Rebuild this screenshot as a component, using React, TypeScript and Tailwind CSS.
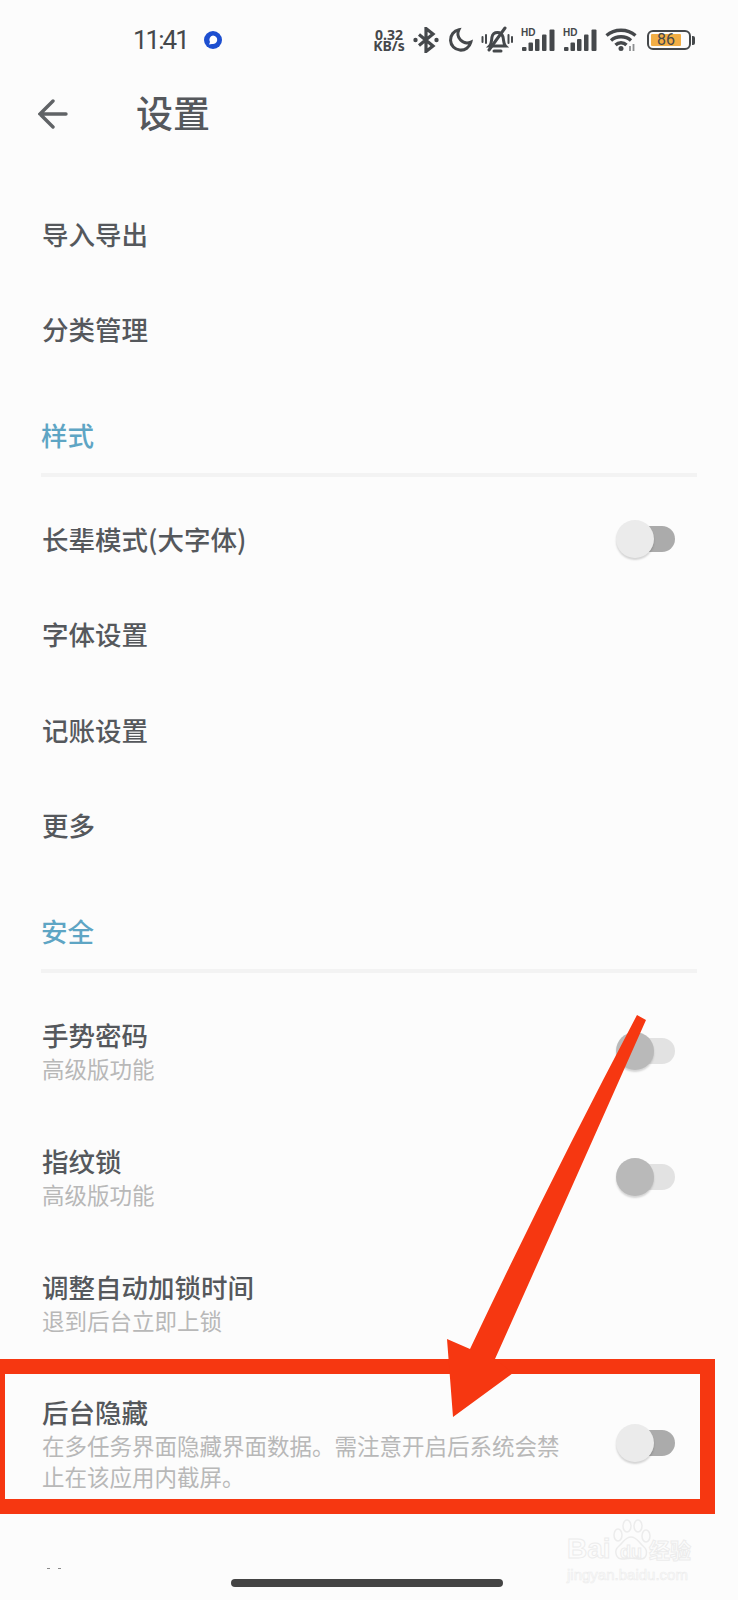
import React from 'react';

const fontStack = "font-['Noto_Sans_CJK_SC','Noto_Sans',sans-serif]";

const BluetoothIcon = () => (
  <svg width="26" height="26" viewBox="0 0 26 26" fill="none" stroke="#45484b" strokeWidth="3.200">
    <path d="M6 7.500l14 11.500-7 5.500V1.500l7 5.500L6 18.500" />
    <circle cx="2.500" cy="13" r="2.200" fill="#45484b" stroke="none" />
    <circle cx="23.500" cy="13" r="2.200" fill="#45484b" stroke="none" />
  </svg>
);

const MoonIcon = () => (
  <svg width="26" height="26" viewBox="0 0 24 24" fill="none" stroke="#45484b" strokeWidth="2.800" strokeLinecap="round">
    <path d="M11 2.500a9.500 9.500 0 1 0 11 11.500 8.500 8.500 0 0 1-11-11.500Z" />
  </svg>
);

const MuteIcon = () => (
  <svg width="32" height="28" viewBox="0 0 32 28" fill="none" stroke="#45484b" strokeWidth="3" strokeLinecap="round">
    <path d="M8.500 20c2-2 2-6 2.500-9 .6-3 3-4.500 5.500-4.500s4.500 1 5.500 4.500c.7 3 .5 7 2.500 9z" />
    <path d="M13 25h7" />
    <path d="M8 24 24 2" />
    <path d="M1.500 11v5M5 9v8M27.500 9v8M31 11v5" strokeWidth="2" />
  </svg>
);

const SignalIcon = () => (
  <svg width="34" height="24" viewBox="0 0 34 24">
    <text x="0" y="8" fontSize="10" fontWeight="700" fontFamily="Liberation Sans, sans-serif" fill="#45484b">HD</text>
    <rect x="1" y="19" width="4.500" height="4" rx="1" fill="#45484b" />
    <rect x="7.500" y="14.500" width="4.500" height="8.500" rx="1" fill="#45484b" />
    <rect x="14" y="11" width="4.500" height="12" rx="1" fill="#45484b" />
    <rect x="21" y="6.500" width="4.500" height="16.500" rx="1" fill="#45484b" />
    <rect x="28.500" y="1.500" width="5" height="21.500" rx="1" fill="#45484b" />
  </svg>
);

const WifiIcon = () => (
  <svg width="34" height="24" viewBox="0 0 34 24" fill="none" stroke="#45484b" strokeWidth="3.300">
    <path d="M1.500 7.500c8-7 21-7 29 0" />
    <path d="M6 12.500c5.500-5 14.500-5 20 0" />
    <path d="M10.500 17c3-3 8-3 11 0" />
    <circle cx="16" cy="20.500" r="2.500" fill="#45484b" stroke="none" />
    <path d="M25 18v5M28.500 16v7" stroke="#8d8f91" strokeWidth="1.800" />
  </svg>
);

const Toggle = ({ dim = false }: { dim?: boolean }) => (
  <div className="relative w-[59px] h-[38px] flex items-center justify-end shrink-0">
    <div className={`w-[50px] h-[26px] rounded-full ${dim ? 'bg-[#e2e2e2]' : 'bg-[#ababab]'}`} />
    <div
      className={`absolute left-0 top-0 w-[38px] h-[38px] rounded-full shadow-[0_2px_2px_rgba(0,0,0,0.16)] ${
        dim ? 'bg-[#b9b9b9]' : 'bg-[#ebebeb]'
      }`}
    />
  </div>
);

const Row = ({ title, toggle }: { title: string; toggle?: boolean }) => (
  <div className="h-[95.500px] flex items-center justify-between pl-[42px] pr-[63px]">
    <span className="text-[26.500px] leading-[34px] font-medium text-[#55585c]">{title}</span>
    {toggle && <Toggle />}
  </div>
);

const SubRow = ({ title, sub, toggle, dim }: { title: string; sub: string; toggle?: boolean; dim?: boolean }) => (
  <div className="h-[126px] flex items-center justify-between pl-[42px] pr-[63px]">
    <div>
      <div className="text-[26.500px] leading-[34px] font-medium text-[#55585c]">{title}</div>
      <div className="text-[22.500px] leading-[33px] text-[#b8b8b8]">{sub}</div>
    </div>
    {toggle && <Toggle dim={dim} />}
  </div>
);

const Section = ({ title, className }: { title: string; className: string }) => (
  <div className={`mx-[41px] flex items-end pb-[21px] border-b-[4px] border-[#f3f3f3] ${className}`}>
    <span className="text-[26.500px] leading-[34px] font-medium text-[#5ea5c4]">{title}</span>
  </div>
);

const App: React.FC = () => {
  return (
    <div className={`relative w-[738px] h-[1600px] overflow-hidden bg-[#fcfcfc] ${fontStack}`}>
      {/* status bar */}
      <div className="h-[80px] flex items-center justify-between pl-[133px] pr-[43px]">
        <div className="flex items-center gap-[16px]">
          <span className="text-[26px] leading-[30px] tracking-[-2px] text-[#45484b] font-['Roboto',sans-serif]">11:41</span>
          <svg width="18" height="18" viewBox="0 0 18 18">
            <circle cx="9" cy="9" r="9" fill="#1d4fd0" />
            <path d="M9 4.500a4.300 4.300 0 1 1-1 8.500l-3 .5 1-2.500a4.300 4.300 0 0 1 3-6.500Z" fill="#fff" />
          </svg>
        </div>
        <div className="flex items-center gap-[8px]">
          <div className="w-[32px] text-center text-[14px] leading-[11px] font-bold text-[#45484b] font-['Noto_Sans',sans-serif]">
            0.32 KB/s
          </div>
          <BluetoothIcon />
          <MoonIcon />
          <MuteIcon />
          <SignalIcon />
          <SignalIcon />
          <WifiIcon />
          <div className="flex items-center gap-[1px]">
            <div className="w-[44px] h-[20px] rounded-[6px] border-[2px] border-[#45484b] p-[2px]">
              <div className="h-full w-[30px] bg-[#f2ae45] rounded-[1px] text-[16px] leading-[12px] text-center text-[#45484b] font-['Roboto',sans-serif]">
                86
              </div>
            </div>
            <div className="w-[3px] h-[9px] rounded-r-[2px] bg-[#45484b]" />
          </div>
        </div>
      </div>

      {/* header */}
      <div className="h-[106px] pb-[43px] flex items-center pl-[38px]">
        <svg className="mt-[4px]" width="30" height="30" viewBox="0 0 30 30" fill="none" stroke="#606366" strokeWidth="3.400" strokeLinecap="round">
          <path d="M2 15h26M15 2 2 15l13 13" />
        </svg>
        <span className="ml-[68px] text-[37px] leading-[44px] font-medium text-[#55585c]">设置</span>
      </div>

      <Row title="导入导出" />
      <Row title="分类管理" />
      <Section title="样式" className="h-[100px] mb-[14px]" />
      <Row title="长辈模式(大字体)" toggle />
      <Row title="字体设置" />
      <Row title="记账设置" />
      <Row title="更多" />
      <Section title="安全" className="h-[100px] mb-[15px]" />
      <SubRow title="手势密码" sub="高级版功能" toggle dim />
      <SubRow title="指纹锁" sub="高级版功能" toggle dim />
      <SubRow title="调整自动加锁时间" sub="退到后台立即上锁" />
      <div className="flex items-center justify-between pl-[42px] pr-[63px] pt-[28px]">
        <div className="w-[522px]">
          <div className="text-[26.500px] leading-[36px] font-medium text-[#55585c]">后台隐藏</div>
          <div className="text-[22.500px] leading-[31px] text-[#b8b8b8]">
            在多任务界面隐藏界面数据。需注意开启后系统会禁止在该应用内截屏。
          </div>
        </div>
        <Toggle />
      </div>

      {/* cut off next row */}
      <div className="absolute left-[47px] top-[1568px] flex gap-[8px]">
        <div className="w-[3px] h-[1px] bg-[#8a8a8a]" />
        <div className="w-[3px] h-[1px] bg-[#8a8a8a]" />
      </div>

      {/* home indicator */}
      <div className="absolute left-[231px] top-[1579px] w-[272px] h-[8px] rounded-full bg-[#444444]" />

      {/* red annotation */}
      <div className="absolute left-[-10px] top-[1359px] w-[725px] h-[155px] border-[15px] border-[#f63711]" />
      <svg className="absolute left-0 top-0" width="738" height="1600" viewBox="0 0 738 1600">
        <path d="M637 1015 646 1020 Q575 1180 495 1359 L513 1373 453 1417 447 1339 470 1349 Q550 1180 637 1015Z" fill="#f63711" />
      </svg>

      {/* watermark */}
      <div className="absolute left-[567px] top-[1518px] w-[135px] h-[66px] font-['Liberation_Sans',sans-serif] text-[#fcfcfc] [-webkit-text-stroke:1px_#ececec]">
        <svg className="absolute left-[43px] top-0" width="42" height="48" viewBox="0 0 42 48" fill="none" stroke="#ececec" strokeWidth="1.500">
          <ellipse cx="8" cy="17" rx="4" ry="6" />
          <ellipse cx="17" cy="8" rx="4" ry="6" />
          <ellipse cx="28" cy="8" rx="4" ry="6" />
          <ellipse cx="36" cy="18" rx="4" ry="6" />
          <path d="M21 19c-6 0-8 6-12 9-6 5-3 14 5 13 5-1 10-1 15 0 8 1 10-8 4-13-4-3-6-9-12-9Z" />
        </svg>
        <div className="absolute left-0 top-[15px] flex items-baseline text-[28px] leading-[32px] font-bold">
          <span className="w-[46px]">Bai</span>
          <span className="text-[18px] w-[36px] text-center">du</span>
          <span className="text-[21px] font-['Noto_Sans_CJK_SC',sans-serif]">经验</span>
        </div>
        <div className="absolute left-0 top-[48px] text-[15px] leading-[18px] whitespace-nowrap [-webkit-text-stroke:0.6px_#ececec]">
          jingyan.baidu.com
        </div>
      </div>
    </div>
  );
};

export default App;
